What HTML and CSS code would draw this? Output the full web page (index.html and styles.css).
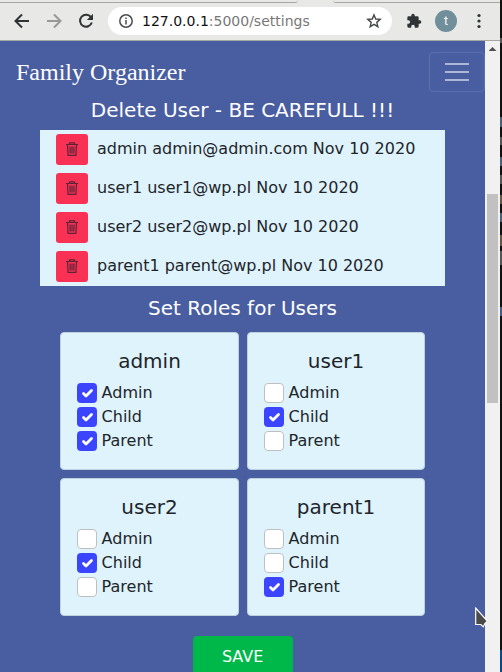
FILE: index.html
```
<!DOCTYPE html>
<html lang="en">
<head>
<meta charset="utf-8">
<title>Family Organizer</title>
<link rel="stylesheet" href="styles.css">
</head>
<body>
<svg width="0" height="0" class="defs">
  <symbol id="trash" viewBox="0 0 14 16"><g fill="none" stroke="#5c2537" stroke-width="1.2"><path d="M1 3.500h12M4.500 3V1.800h5V3M2.500 4l.6 10.300h7.800L11.500 4M5 5.500l.2 7M7 5.500v7M9 5.500l-.2 7"/></g></symbol>
</svg>
<div class="window">
  <header class="toolbar">
    <div class="tabs"><i></i><i></i></div>
    <div class="controls">
      <svg class="nav" viewBox="0 0 16 16"><path d="M15 8H2M8 1.500 1.500 8 8 14.500"/></svg>
      <svg class="nav off" viewBox="0 0 16 16"><path d="M1 8h13M8 1.500 14.500 8 8 14.500"/></svg>
      <svg class="nav" viewBox="0 0 16 16"><path d="M13 4.300A6 6 0 1 0 13.800 9.500"/><path class="solid" d="M15 .8v6.200H8.800z"/></svg>
      <div class="address">
        <svg class="info" viewBox="0 0 14 14"><circle cx="7" cy="7" r="6.200"/><path d="M7 6v4.500M7 3.400v1.500"/></svg>
        <span class="url">127.0.0.1<em>:5000/settings</em></span>
        <svg class="star" viewBox="0 0 16 16"><path d="M8 1.900l1.750 4.100 4.450.4-3.400 2.950 1.050 4.350L8 11.400 4.150 13.700 5.200 9.350 1.800 6.400l4.450-.4z"/></svg>
      </div>
      <svg class="puzzle" viewBox="0 0 24 24"><path d="M20.500 11H19V7a2 2 0 0 0-2-2h-4V3.500a2.500 2.500 0 0 0-5 0V5H4a2 2 0 0 0-2 2v3.800h1.500a2.700 2.700 0 0 1 0 5.400H2V20a2 2 0 0 0 2 2h3.800v-1.500a2.700 2.700 0 0 1 5.400 0V22H17a2 2 0 0 0 2-2v-4h1.500a2.500 2.500 0 0 0 0-5z"/></svg>
      <span class="avatar">t</span>
      <svg class="dots" viewBox="0 0 4 16"><circle cx="2" cy="2.500" r="1.600"/><circle cx="2" cy="8" r="1.600"/><circle cx="2" cy="13.500" r="1.600"/></svg>
    </div>
  </header>
  <div class="viewport">
    <main class="page">
      <nav class="navbar">
        <a class="brand">Family Organizer</a>
        <button class="toggler" aria-label="Menu"><i></i><i></i><i></i></button>
      </nav>
      <h1 class="heading">Delete User - BE CAREFULL !!!</h1>
      <ul class="users">
        <li><button class="delete"><svg><use href="#trash"/></svg></button>admin admin@admin.com Nov 10 2020</li>
        <li><button class="delete"><svg><use href="#trash"/></svg></button>user1 user1@wp.pl Nov 10 2020</li>
        <li><button class="delete"><svg><use href="#trash"/></svg></button>user2 user2@wp.pl Nov 10 2020</li>
        <li><button class="delete"><svg><use href="#trash"/></svg></button>parent1 parent@wp.pl Nov 10 2020</li>
      </ul>
      <h1 class="heading roles-heading">Set Roles for Users</h1>
      <div class="cards">
        <section class="card"><h2>admin</h2>
          <label><span class="box on"><svg viewBox="0 0 20 20"><path d="M6.500 10.500 9 13l5.500-5.500"/></svg></span>Admin</label>
          <label><span class="box on"><svg viewBox="0 0 20 20"><path d="M6.500 10.500 9 13l5.500-5.500"/></svg></span>Child</label>
          <label><span class="box on"><svg viewBox="0 0 20 20"><path d="M6.500 10.500 9 13l5.500-5.500"/></svg></span>Parent</label>
        </section>
        <section class="card"><h2>user1</h2>
          <label><span class="box"></span>Admin</label>
          <label><span class="box on"><svg viewBox="0 0 20 20"><path d="M6.500 10.500 9 13l5.500-5.500"/></svg></span>Child</label>
          <label><span class="box"></span>Parent</label>
        </section>
        <section class="card"><h2>user2</h2>
          <label><span class="box"></span>Admin</label>
          <label><span class="box on"><svg viewBox="0 0 20 20"><path d="M6.500 10.500 9 13l5.500-5.500"/></svg></span>Child</label>
          <label><span class="box"></span>Parent</label>
        </section>
        <section class="card"><h2>parent1</h2>
          <label><span class="box"></span>Admin</label>
          <label><span class="box"></span>Child</label>
          <label><span class="box on"><svg viewBox="0 0 20 20"><path d="M6.500 10.500 9 13l5.500-5.500"/></svg></span>Parent</label>
        </section>
      </div>
      <button class="save">SAVE</button>
    </main>
    <div class="scrollbar"><i class="arrow"></i><i class="thumb"></i></div>
  </div>
</div>
<svg class="cursor" viewBox="0 0 13 22"><path d="M.7 1v16.500h5.200l2.300 2.300 1.800-3.500 2.500-2z"/></svg>
</body>
</html>
```
FILE: styles.css
```
* { box-sizing: border-box; }
body {
  margin: 0;
  height: 672px;
  overflow: hidden;
  background: linear-gradient(#111 0 38px, #555 38px 43px, #111 43px 117px, #456078 117px 127px, #111 127px 137px, #555 137px 145px, #111 145px 157px, #456078 157px 166px, #111 166px 175px, #555 175px 184px, #111 184px 195px, #655540 195px 204px, #111 204px 213px, #456078 213px 222px, #111 222px 235px, #655540 235px 246px, #111 246px 251px, #555 251px 265px, #111 265px 307px, #405c88 307px 316px, #111 316px 650px, #064a87 650px);
  font: 16px/24px "DejaVu Sans", sans-serif;
  color: #212529;
}
button { border: 0; padding: 0; font: inherit; }
svg { display: block; flex: none; }
.defs { position: absolute; }
.window { width: 500px; height: 672px; display: flex; flex-direction: column; }
.toolbar { height: 41px; flex: none; background: #e8e8e6; border-bottom: 1px solid #a5a5a2; }
.tabs { height: 3px; display: flex; gap: 35px; }
.tabs i { border-bottom: 1px solid #a5a5a2; width: 298px; border-bottom-right-radius: 4px; }
.tabs i + i { width: 167px; border-radius: 0 0 0 4px; }
.controls { height: 36px; display: flex; align-items: center; padding-left: 14px; }
.nav { width: 16px; height: 16px; margin-right: 16px; fill: none; stroke: #2e3436; stroke-width: 2; }
.nav .solid { fill: #2e3436; stroke: none; }
.off { stroke: #969997; }
.address { width: 284px; height: 28px; margin-left: -2px; border-radius: 14px; background: #fff; display: flex; align-items: center; padding: 0 10px 0 11px; }
.info { width: 14px; height: 14px; fill: none; stroke: #4a4c4d; stroke-width: 1.500; }
.url { margin-left: 9px; font-size: 14px; color: #111; white-space: nowrap; }
.url em { font-style: normal; color: #777; }
.star { width: 16px; height: 16px; margin-left: auto; fill: none; stroke: #454749; stroke-width: 1.400; }
.puzzle { width: 16px; height: 16px; margin-left: 14px; fill: #2e3436; }
.avatar { width: 22px; height: 22px; margin-left: 13px; border-radius: 50%; background: #718f9b; color: #fff; font: 12px/22px Roboto, sans-serif; text-align: center; }
.dots { width: 4px; height: 16px; margin-left: 20px; fill: #2e3436; }
.viewport { flex: 1; min-height: 0; display: flex; }
.page { width: 485px; background: #495da1; overflow: hidden; }
.navbar { height: 54px; padding: 11px 0 0 16px; display: flex; justify-content: space-between; }
.brand { font: 24px/41px "Liberation Serif", serif; color: #fff; }
.toggler { width: 56px; height: 40px; border: 1px solid #5c6fad; border-radius: 4px; background: none; display: flex; flex-direction: column; align-items: center; justify-content: center; gap: 6px; }
.toggler i { width: 24px; height: 2px; background: #adb6d6; }
.heading { margin: 3px 0 0; font-size: 20px; line-height: 24px; font-weight: 400; color: #fff; text-align: center; }
.users { width: 405px; height: 156px; margin: 8px 0 0 40px; padding: 0 16px; list-style: none; background: #dff3fd; }
.users li { height: 39px; display: flex; align-items: center; gap: 9px; line-height: 37px; padding-bottom: 2px; white-space: nowrap; }
.delete { width: 32px; height: 31px; margin-top: 1px; border-radius: 3px; background: #f93154; display: flex; align-items: center; justify-content: center; }
.delete svg { width: 14px; height: 16px; }
.roles-heading { margin-top: 10px; }
.cards { width: 365px; margin: 12px 0 0 60px; display: grid; grid-template-columns: 179px 178px; gap: 8px; }
.card { height: 138px; border: 1px solid #bdd1dd; border-radius: 4px; background: #dff3fd; padding: 16px; }
.card h2 { margin: 0 0 8px; font-size: 20px; line-height: 24px; font-weight: 400; text-align: center; }
.card label { height: 24px; display: flex; align-items: center; gap: 4.600px; }
.box { width: 20px; height: 20px; border: 1px solid #bfbfbf; border-radius: 4px; background: #fff; }
.on { border: 0; background: #3b45ff; }
.box path { fill: none; stroke: #fff; stroke-width: 2.800; stroke-linecap: round; stroke-linejoin: round; }
.save { display: block; width: 100px; height: 42px; margin: 20px 0 0 192.600px; border-radius: 4px; background: #00b74a; color: #fff; }
.scrollbar { width: 15px; background: #f1f1f1; padding: 6px 2px 0; }
.arrow { display: block; margin: 0 auto; width: 8px; height: 4px; background: #505050; clip-path: polygon(50% 0, 100% 100%, 0 100%); }
.thumb { display: block; width: 11px; height: 209px; margin-top: 143px; background: #c1c1c1; }
.cursor { position: absolute; left: 475px; top: 607px; width: 13px; height: 22px; fill: #4a4a4a; stroke: #fff; stroke-width: 1.200; }
```
